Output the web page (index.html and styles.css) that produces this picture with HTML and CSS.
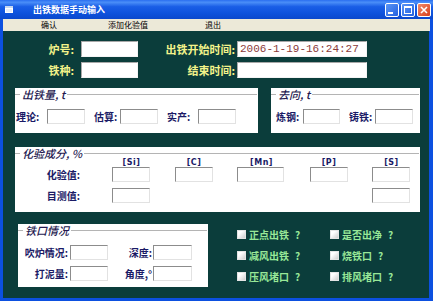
FILE: index.html
```html
<!DOCTYPE html>
<html lang="zh-CN">
<head>
<meta charset="utf-8">
<title>出铁数据手动输入</title>
<link rel="stylesheet" href="styles.css">
</head>
<body>
<div class="window">
  <div class="titlebar">
    <span class="app-icon">
      <svg width="8" height="7" viewBox="0 0 8 7"><rect x="0" y="0" width="8" height="7" fill="#fff"/><rect x="0" y="0" width="8" height="2" fill="#c8d8f0"/><rect x="1" y="3" width="6" height="3" fill="#e8eef8"/></svg>
    </span>
    <span class="title">出铁数据手动输入</span>
    <div class="ctrls">
      <span class="cbtn min"><svg width="14" height="14" viewBox="0 0 14 14"><rect x="3" y="9" width="5" height="2" fill="#fff"/></svg></span>
      <span class="cbtn max"><svg width="14" height="14" viewBox="0 0 14 14"><rect x="3.5" y="3.5" width="7" height="7" fill="none" stroke="#fff"/><rect x="3" y="3" width="8" height="2" fill="#fff"/></svg></span>
      <span class="cbtn close"><svg width="14" height="14" viewBox="0 0 14 14"><path d="M4 4 L10 10 M10 4 L4 10" stroke="#fff" stroke-width="1.6"/></svg></span>
    </div>
  </div>
  <div class="menubar">
    <span class="mi m1">确认</span>
    <span class="mi m2">添加化验值</span>
    <span class="mi">退出</span>
  </div>
  <div class="client">
    <div class="topform">
      <span class="tl">炉号:</span><input class="tin" type="text">
      <span class="tl wide">出铁开始时间:</span><input class="tin date" type="text" value="2006-1-19-16:24:27">
      <span class="tl">铁种:</span><input class="tin" type="text">
      <span class="tl wide">结束时间:</span><input class="tin" type="text">
    </div>

    <div class="grouprow">
      <section class="group g1">
        <div class="gtitle"><span class="gl">出铁量, t</span></div>
        <div class="frow">
          <span class="fl w31">理论:</span><input class="fin" type="text">
          <span class="fl w26 sp">估算:</span><input class="fin" type="text">
          <span class="fl w31 sp">实产:</span><input class="fin" type="text">
        </div>
      </section>
      <section class="group g2">
        <div class="gtitle"><span class="gl">去向, t</span></div>
        <div class="frow pad5">
          <span class="fl w27">炼钢:</span><input class="fin w37" type="text">
          <span class="fl w26 sp">铸铁:</span><input class="fin" type="text">
        </div>
      </section>
    </div>

    <section class="group g3">
      <div class="gtitle"><span class="gl">化验成分, %</span></div>
      <div class="assay">
        <span class="hd c1">[Si]</span>
        <span class="hd c2">[C]</span>
        <span class="hd c3">[Mn]</span>
        <span class="hd c4">[P]</span>
        <span class="hd c5">[S]</span>
        <span class="fl al r2">化验值:</span>
        <input class="fin c1 r2" type="text">
        <input class="fin c2 r2" type="text">
        <input class="fin c3 r2 wmn" type="text">
        <input class="fin c4 r2" type="text">
        <input class="fin c5 r2" type="text">
        <span class="fl al r3">目测值:</span>
        <input class="fin c1 r3" type="text">
        <input class="fin c5 r3" type="text">
      </div>
    </section>

    <div class="bottomrow">
      <section class="group g4">
        <div class="gtitle"><span class="gl">铁口情况</span></div>
        <div class="tap">
          <span class="fl ar1">吹炉情况:</span><input class="fin" type="text">
          <span class="fl ar2">深度:</span><input class="fin" type="text">
          <span class="fl ar1">打泥量:</span><input class="fin" type="text">
          <span class="fl ar2">角度,°</span><input class="fin" type="text">
        </div>
      </section>
      <div class="checks">
        <label class="ck"><span class="cb"></span>正点出铁<span class="q">?</span></label>
        <label class="ck"><span class="cb"></span>是否出净<span class="q">?</span></label>
        <label class="ck"><span class="cb"></span>减风出铁<span class="q">?</span></label>
        <label class="ck"><span class="cb"></span>烧铁口<span class="q">?</span></label>
        <label class="ck"><span class="cb"></span>压风堵口<span class="q">?</span></label>
        <label class="ck"><span class="cb"></span>排风堵口<span class="q">?</span></label>
      </div>
    </div>
  </div>
</div>
</body>
</html>
```
FILE: styles.css
```css
* { box-sizing: border-box; }
html, body { margin: 0; padding: 0; }
body {
  width: 433px;
  height: 301px;
  overflow: hidden;
  font-family: "Noto Sans CJK SC", "Noto Sans", sans-serif;
  background: #0c4fe0;
}
.window {
  width: 433px;
  height: 301px;
  display: flex;
  flex-direction: column;
  background: #0c50e0;
}
.titlebar {
  height: 19px;
  display: flex;
  align-items: center;
  background: linear-gradient(to bottom, #2a6ef0 0%, #4a8ef8 12%, #1a5ee6 35%, #0d52dc 70%, #0a48cc 100%);
}
.app-icon { display: flex; margin-left: 5px; width: 8px; }
.title {
  margin-left: 20px;
  color: #fff;
  font-size: 9px;
  font-weight: bold;
  line-height: 19px;
}
.ctrls {
  margin-left: auto;
  margin-right: 2px;
  display: flex;
  gap: 2px;
}
.cbtn {
  width: 14px;
  height: 14px;
  border: 1px solid #fff;
  border-radius: 2px;
  display: flex;
  align-items: center;
  justify-content: center;
  background: linear-gradient(135deg, #5a95f5, #2260e0);
}
.cbtn svg { display: block; flex: none; margin: -1px; }
.cbtn.close { background: linear-gradient(135deg, #f08a6a, #d8401c); }

.menubar {
  height: 12px;
  margin: 0 3px;
  background: #ece9d8;
  display: flex;
  align-items: center;
  padding-left: 38px;
  font-size: 8px;
  color: #000;
}
.mi { line-height: 12px; }
.m1 { width: 67px; }
.m2 { width: 97px; }

.client {
  flex: 1;
  margin: 0 4px 3px 3px;
  background: #0b3d3b;
  padding-left: 12px;
}

.topform {
  display: grid;
  grid-template-columns: 66px 57px 99px 130px;
  grid-auto-rows: 16px;
  row-gap: 5px;
  margin-top: 10px;
}
.tl {
  color: #f3f38a;
  font-size: 11px;
  font-weight: bold;
  text-align: right;
  line-height: 16px;
  padding-right: 7px;
  white-space: nowrap;
}
.tl.wide { padding-right: 2px; }
.tin {
  width: 100%;
  height: 16px;
  margin: 0;
  border: 1px solid;
  border-color: #a8a8a8 #f4f4f4 #f4f4f4 #a8a8a8;
  background: #fff;
  padding: 0 2px;
  font-family: "Liberation Mono", monospace;
  font-size: 11px;
  color: #8b3a3a;
  outline: none;
}

.grouprow {
  display: flex;
  margin-top: 10px;
}
.group {
  background: #fff;
}
.g1 { width: 243px; height: 45px; }
.g2 { width: 149px; height: 45px; margin-left: 13px; }
.g3 { width: 405px; height: 65px; margin-top: 14px; }
.g4 { width: 190px; height: 63px; margin-left: 3px; }

.gtitle {
  display: flex;
  align-items: center;
  height: 12px;
}
.gtitle::before {
  content: "";
  width: 5px;
  border-top: 1px solid #b4b4b4;
  margin-right: 2px;
}
.gtitle::after {
  content: "";
  flex: 1;
  border-top: 1px solid #b4b4b4;
  margin-left: 2px;
  margin-right: 1px;
}
.gl {
  font-size: 11px;
  font-style: italic;
  font-weight: 500;
  color: #24184f;
  line-height: 12px;
  white-space: nowrap;
}

.frow {
  display: flex;
  align-items: center;
  margin-top: 9px;
  padding-left: 1px;
}
.frow.pad5 { padding-left: 5px; }
.fl {
  font-size: 10px;
  font-weight: bold;
  color: #1a1a66;
  line-height: 15px;
  white-space: nowrap;
}
.w31 { width: 31px; }
.w26 { width: 26px; }
.w27 { width: 27px; }
.sp { margin-left: 9px; }
.fin {
  width: 38px;
  height: 15px;
  margin: 0;
  padding: 0;
  border: 1px solid;
  border-color: #8c8c8c #e2e2e2 #e2e2e2 #8c8c8c;
  background: #fff;
  outline: none;
}
.fin.w37 { width: 37px; }

.assay {
  display: grid;
  grid-template-columns: 73px 39px 38px 49px 38px 39px;
  grid-template-rows: 8px 21px 21px;
  column-gap: 24px;
  align-items: start;
}
.hd {
  grid-row: 1;
  justify-self: center;
  font-family: "DejaVu Sans", sans-serif;
  font-size: 8px;
  font-weight: bold;
  line-height: 8px;
  letter-spacing: 0.5px;
  color: #1a1a66;
}
.c1 { grid-column: 2; }
.c2 { grid-column: 3; }
.c3 { grid-column: 4; }
.c4 { grid-column: 5; }
.c5 { grid-column: 6; }
.r2 { grid-row: 2; }
.r3 { grid-row: 3; }
.al {
  grid-column: 1;
  text-align: right;
  padding-right: 8px;
}
.fin.wmn { width: 47px; }

.bottomrow {
  display: flex;
  margin-top: 12px;
}
.tap {
  display: grid;
  grid-template-columns: 52px 38px 45px 39px;
  grid-auto-rows: 15px;
  row-gap: 6px;
  margin-top: 9px;
}
.ar1 { text-align: right; padding-right: 2px; }
.ar2 { text-align: right; padding-right: 1px; }
.tap .fin { width: 100%; }

.checks {
  margin-left: 29px;
  display: grid;
  grid-template-columns: 93px 90px;
  grid-auto-rows: 21px;
  align-items: center;
}
.ck {
  display: flex;
  align-items: center;
  font-size: 10px;
  font-weight: bold;
  color: #98e898;
  white-space: nowrap;
}
.q { margin-left: 6px; }
.cb {
  width: 9px;
  height: 9px;
  margin-right: 3px;
  border: 1px solid #e4e4e4;
  background: linear-gradient(135deg, #ffffff 30%, #cfcfcf 100%);
}
```
